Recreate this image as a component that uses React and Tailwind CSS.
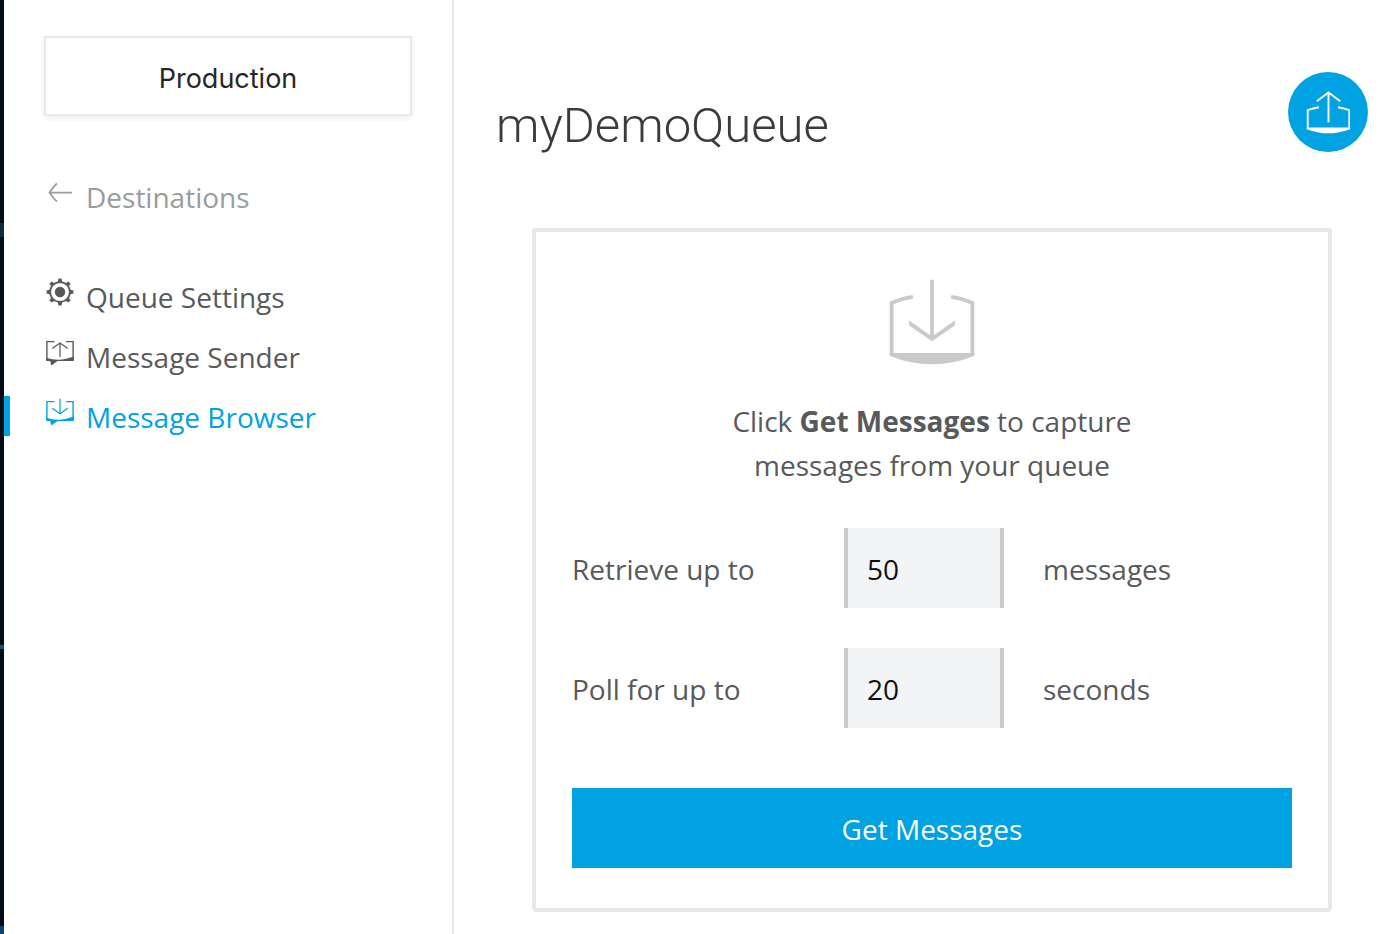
import React from "react";

function ArrowLeftIcon() {
  return (
    <svg className="h-7 w-7" viewBox="0 0 28 28" fill="none" stroke="currentColor" strokeWidth="1.7" aria-hidden="true">
      <path d="M26 14.6H3.5M11 5.5Q8.5 7.5 3.5 14.6Q8.5 21.7 11 23.7" />
    </svg>
  );
}

function GearIcon() {
  const angles = [0, 45, 90, 135, 180, 225, 270, 315];
  return (
    <svg className="h-7 w-7" viewBox="0 0 28 28" aria-hidden="true">
      <circle cx="14" cy="14" r="9.9" fill="none" stroke="currentColor" strokeWidth="1.7" />
      <circle cx="14" cy="14" r="5.2" fill="currentColor" />
      {angles.map((a) => (
        <path key={a} d="M11.6 4.4L12.5 0.6H15.5L16.4 4.4Z" fill="currentColor" transform={`rotate(${a} 14 14)`} />
      ))}
    </svg>
  );
}

function BubbleIcon({ arrow }) {
  return (
    <svg className="h-7 w-7" viewBox="0 0 28 28" fill="none" stroke="currentColor" strokeWidth="1.4" aria-hidden="true">
      <path d="M8.5 3.6H0.9V21.5M20 3.6H27.1V21.5" />
      <path d="M0.2 19.8Q7 22 14 21.7Q21 21.2 27.8 18.6V22.9H11.5L5.2 27.6L4.2 22.9H0.2Z" fill="currentColor" stroke="none" />
      <path d={arrow} strokeWidth="1.2" />
    </svg>
  );
}

function TrayUpIcon() {
  return (
    <svg className="h-11 w-11" viewBox="0 0 44 44" fill="none" stroke="currentColor" strokeWidth="1.9" aria-hidden="true">
      <path d="M13 17.2Q7 18.2 1.7 20.2V38.5M32 17.2Q38 18.2 43.3 20.2V38.5" />
      <path d="M0.8 37.4H44V39.2Q22.5 47.5 0.8 39.2Z" fill="currentColor" stroke="none" />
      <path d="M22.5 32.3V2.6M10.8 11.2L22.5 2.4L34.2 11.2" />
    </svg>
  );
}

function TrayDownIcon() {
  return (
    <svg className="h-[86px] w-[86px]" viewBox="0 0 86 86" fill="none" stroke="currentColor" strokeWidth="3.8" aria-hidden="true">
      <path d="M23.8 17.8Q12 19.5 2.6 24V76M62.2 17.8Q74 19.5 83.4 24V76" />
      <path d="M0.7 73.9H85.3V76.7Q43 94 0.7 76.7Z" fill="currentColor" stroke="none" />
      <path d="M43 0.8V59" />
      <path d="M20 41.6L43 57.6L66 41.6V46.2L43 62.3L20 46.2Z" fill="currentColor" stroke="none" />
    </svg>
  );
}

const navItems = [
  { label: "Queue Settings", icon: <GearIcon /> },
  { label: "Message Sender", icon: <BubbleIcon arrow="M14 19V5M6.3 10.6L14 5L21.7 10.6" /> },
  { label: "Message Browser", icon: <BubbleIcon arrow="M14 0.8V15.8M6.3 10.2L14 15.8L21.7 10.2" />, active: true },
];

function NavLink({ label, icon, active, muted }) {
  const color = active ? "text-[#00a2e2]" : muted ? "text-[#999b9c]" : "text-[#58595b]";
  return (
    <a href="#" aria-current={active ? "page" : undefined} className={`flex h-[60px] items-center ${color}`}>
      <span className={`h-10 w-1.5 shrink-0 ${active ? "bg-[#00a2e2]" : ""}`} />
      <span className="ml-9 mr-3 flex h-9 shrink-0 items-start">{icon}</span>
      <span className="whitespace-nowrap pt-0.5">{label}</span>
    </a>
  );
}

function Sidebar() {
  return (
    <aside className="flex w-[450px] shrink-0 flex-col border-r-2 border-[#e7e8ea] pt-9">
      <button
        type="button"
        className="mx-10 h-20 border-2 border-[#e9e9ea] bg-white pt-1.5 font-[Inter,sans-serif] text-[27px] text-[#262626] shadow-[0_2px_6px_rgba(0,0,0,0.08)]"
      >
        Production
      </button>
      <nav className="mt-[50px]">
        <NavLink label="Destinations" icon={<ArrowLeftIcon />} muted />
        <ul className="mt-10">
          {navItems.map((item) => (
            <li key={item.label}>
              <NavLink {...item} />
            </li>
          ))}
        </ul>
      </nav>
    </aside>
  );
}

function NumberRow({ id, label, value, unit }) {
  return (
    <div className="grid grid-cols-[272px_160px_1fr] items-center">
      <label htmlFor={id} className="pt-0.5">{label}</label>
      <input
        id={id}
        type="text"
        inputMode="numeric"
        defaultValue={value}
        className="h-20 w-full border-x-4 border-[#c8c9cb] bg-[#f3f4f6] px-[19px] pt-0.5 text-[#111] outline-none"
      />
      <span className="pl-[39px] pt-0.5">{unit}</span>
    </div>
  );
}

export default function App() {
  return (
    <div className="flex min-h-screen bg-white font-['Open_Sans',sans-serif] text-[28px] leading-11 text-[#58595b]">
      <div className="flex w-1 shrink-0 flex-col bg-[#020c14]">
        <div className="h-[223px]" />
        <div className="h-3.5 bg-[#0b2c47]" />
        <div className="flex-1" />
        <div className="h-1 bg-[#14507e]" />
        <div className="h-[277px]" />
        <div className="h-2 bg-[#0c4470]" />
      </div>
      <Sidebar />
      <main className="min-w-0 flex-1 pb-[22px] pl-[42px] pr-7 pt-[72px]">
        <header className="flex items-start justify-between">
          <h1 className="pt-6 font-[Roboto,sans-serif] text-[49px] font-light leading-[60px] text-[#3a3b3c]">myDemoQueue</h1>
          <button
            type="button"
            aria-label="Send message"
            className="flex h-20 w-20 items-center justify-center rounded-full bg-[#00a2e2] text-white"
          >
            <TrayUpIcon />
          </button>
        </header>
        <form
          onSubmit={(e) => e.preventDefault()}
          className="mx-9 mt-[72px] flex flex-col rounded border-4 border-[#e7e8ea] px-9 pb-10 pt-[47px]"
        >
          <div className="flex justify-center text-[#c8c9cb]">
            <TrayDownIcon />
          </div>
          <p className="mt-[34px] text-center">
            Click <strong className="font-bold">Get Messages</strong> to capture
            <br />
            messages from your queue
          </p>
          <div className="mt-[41px] flex flex-col gap-10">
            <NumberRow id="max-messages" label="Retrieve up to" value="50" unit="messages" />
            <NumberRow id="poll-seconds" label="Poll for up to" value="20" unit="seconds" />
          </div>
          <button type="submit" className="mt-[60px] h-20 bg-[#00a2e2] pt-0.5 text-white">
            Get Messages
          </button>
        </form>
      </main>
    </div>
  );
}
